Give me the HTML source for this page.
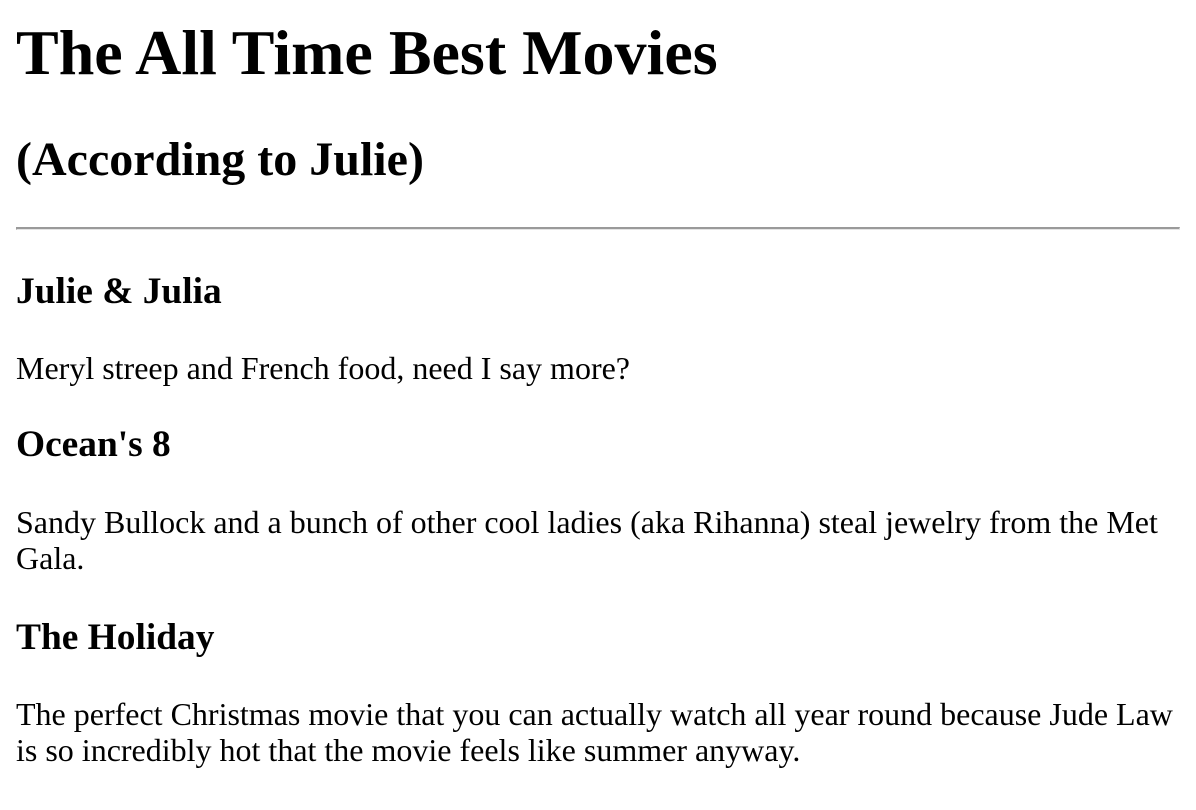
<!DOCTYPE html>
<html><head><meta charset="utf-8"><style>
html,body{margin:0;padding:0;background:#fff;width:1196px;height:810px;overflow:hidden}
body{font-family:"Liberation Serif","Times New Roman",serif;color:#000;position:relative}
.a{position:absolute;left:16px;width:1164px;margin:0}
h1{font-size:64px;line-height:64px;font-weight:bold}
h2{font-size:48px;line-height:48px;font-weight:bold}
h3{font-size:37.4px;line-height:37.4px;font-weight:bold}
p{font-size:32px;line-height:36px}
.hr{position:absolute;left:16px;width:1162px;top:227px;height:0;border-top:2px solid #9a9a9a;border-bottom:1px solid #e4e4e4;border-left:1px solid #9a9a9a;border-right:1px solid #e4e4e4}
</style></head><body>
<h1 class="a" style="top:21px">The All Time Best Movies</h1>
<h2 class="a" style="top:136px">(According to Julie)</h2>
<div class="hr"></div>
<h3 class="a" style="top:273px">Julie &amp; Julia</h3>
<p class="a" style="top:350px">Meryl streep and French food, need I say more?</p>
<h3 class="a" style="top:426px">Ocean's 8</h3>
<p class="a" style="top:504px">Sandy Bullock and a bunch of other cool ladies (aka Rihanna) steal jewelry from the Met Gala.</p>
<h3 class="a" style="top:619px">The Holiday</h3>
<p class="a" style="top:696px">The perfect Christmas movie that you can actually watch all year round because Jude Law is so incredibly hot that the movie feels like summer anyway.</p>
</body></html>
